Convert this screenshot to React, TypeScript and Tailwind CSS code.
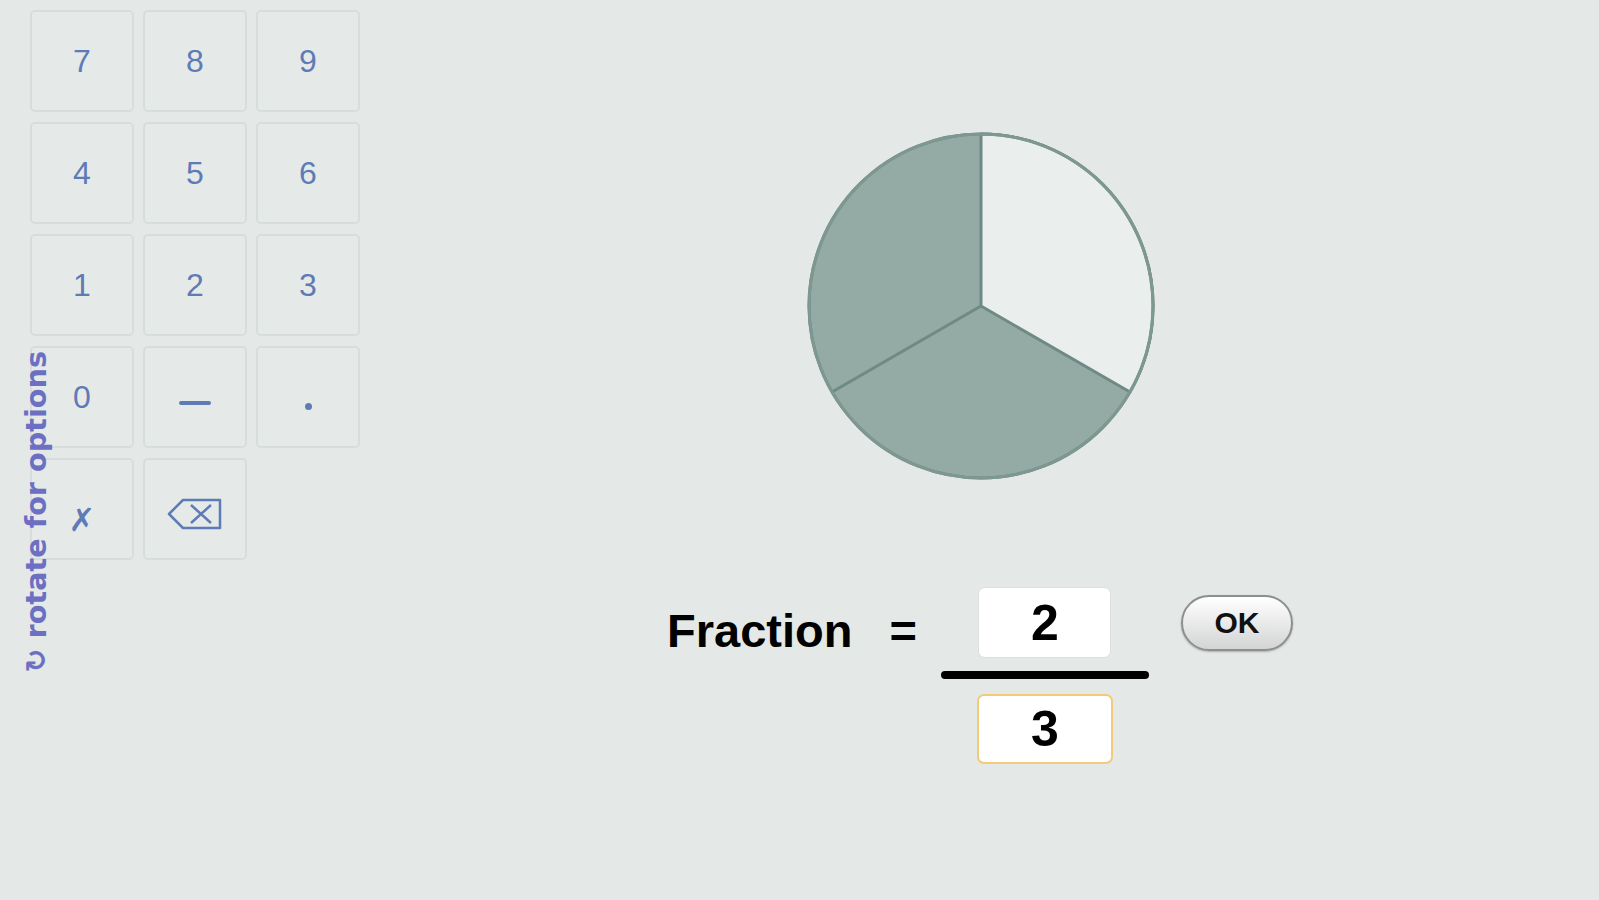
import React from 'react'

const KeyButton = ({ children }: { children: React.ReactNode }) => (
    <button className="w-[104px] h-[102px] rounded-[5px] border-2 border-[#d6dddc] bg-[#e5eae8] flex items-center justify-center text-[32px] leading-none text-[#5f7bb6] font-['Liberation_Sans',Arial,sans-serif]">
        {children}
    </button>
)

const Pie = () => (
    <svg width="354" height="354" viewBox="0 0 354 354">
        <circle cx="177" cy="177" r="172" fill="#94aaa4" stroke="#6f8a84" strokeWidth="3" />
        {/* empty slice, 12 to 4 o'clock */}
        <path d="M177 177 L177 5 A172 172 0 0 1 325.96 263 Z" fill="#eaeeec" stroke="#6f8a84" strokeWidth="3" strokeLinejoin="round" />
        <line x1="177" y1="177" x2="28.04" y2="263" stroke="#6f8a84" strokeWidth="3" />
        <circle cx="177" cy="177" r="172" fill="none" stroke="#7e9791" strokeWidth="3" />
    </svg>
)

const App = () => {
    return (
        <div className="relative w-[1599px] h-[900px] bg-[#e4e9e7] overflow-hidden flex font-['Liberation_Sans',Arial,sans-serif]">
            {/* keypad */}
            <div className="pl-[30px] pt-[10px] w-[360px] shrink-0">
                <div className="grid grid-cols-[104px_104px_104px] gap-x-[9px] gap-y-[10px]">
                    {['7', '8', '9', '4', '5', '6', '1', '2', '3', '0'].map((k) => (
                        <KeyButton key={k}>{k}</KeyButton>
                    ))}
                    <KeyButton>
                        <span className="mt-[12px] w-[32px] h-[4px] rounded-sm bg-[#5f7bb6]" />
                    </KeyButton>
                    <KeyButton>
                        <span className="mt-[18px] w-[7px] h-[7px] rounded-full bg-[#5f7bb6]" />
                    </KeyButton>
                    <KeyButton>
                        <span className="mt-[22px] text-[32px] font-['DejaVu_Sans',sans-serif]">✗</span>
                    </KeyButton>
                    <KeyButton>
                        <svg className="mt-[10px]" width="56" height="34" viewBox="0 0 56 34" fill="none" stroke="#5f7bb6" strokeWidth="2.5" strokeLinejoin="round">
                            <path d="M2 17 L16 3 H53 V31 H16 Z" />
                            <path d="M24 8 L44 26 M44 8 L24 26" />
                        </svg>
                    </KeyButton>
                </div>
            </div>

            {/* rotate hint */}
            <div className="absolute left-[20px] top-[351px] [writing-mode:vertical-rl] rotate-180 text-[28.7px] font-bold leading-[32px] text-[#6d70c2] whitespace-nowrap font-['DejaVu_Sans',sans-serif]">
                ↻ rotate for options
            </div>

            {/* main area */}
            <div className="flex flex-col">
                <div className="ml-[444px] mt-[129px]">
                    <Pie />
                </div>

                <div className="flex items-start ml-[307px] mt-[104px]">
                    <div className="mt-[20px] text-[47px] leading-none font-bold text-black">Fraction</div>
                    <div className="mt-[20px] ml-[37px] text-[47px] leading-none font-bold text-black">=</div>
                    <div className="ml-[24px] w-[208px] flex flex-col items-center">
                        <div className="w-[133px] h-[71px] bg-white rounded-[7px] border border-[#dcdfde] flex items-center justify-center text-[50px] font-bold leading-none">
                            2
                        </div>
                        <div className="mt-[13px] w-[208px] h-[8px] bg-black rounded-full" />
                        <div className="mt-[15px] w-[136px] h-[70px] bg-white rounded-[7px] border-2 border-[#f3ca7a] flex items-center justify-center text-[50px] font-bold leading-none">
                            3
                        </div>
                    </div>
                    <button className="ml-[32px] mt-[8px] w-[112px] h-[56px] rounded-full border-2 border-[#8d8f8e] bg-gradient-to-b from-white to-[#d3d5d4] shadow-[0_1px_2px_rgba(0,0,0,0.25)] flex items-center justify-center text-[30px] font-bold leading-none text-[#111]">
                        OK
                    </button>
                </div>
            </div>
        </div>
    )
}

export default App
